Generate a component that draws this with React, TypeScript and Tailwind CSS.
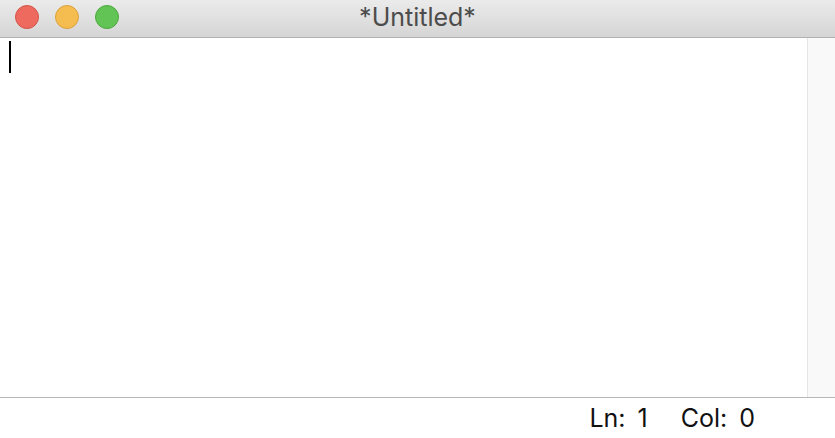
import React from "react";

function Light({ fill, stroke }: { fill: string; stroke: string }) {
  return (
    <svg width="24" height="24" viewBox="0 0 24 24">
      <circle cx="12" cy="12" r="11.5" fill={fill} stroke={stroke} strokeWidth="1" />
    </svg>
  );
}

export default function App() {
  return (
    <div className="w-[835px] h-[438px] flex flex-col bg-white overflow-hidden" style={{ fontFamily: "Inter, 'Noto Sans', sans-serif" }}>
      <div className="relative h-[38px] shrink-0 flex items-center bg-gradient-to-b from-[#ebebeb] to-[#d5d5d5] border-b border-[#b1b1b1]">
        <div className="flex items-center gap-4 pl-[15px] pb-[3px]">
          <Light fill="#ee6a5f" stroke="#d45348" />
          <Light fill="#f5bd4f" stroke="#d9a13c" />
          <Light fill="#61c454" stroke="#4ca83d" />
        </div>
        <div className="absolute inset-0 flex items-center justify-center pb-[3px] text-[25px] text-[#4c4c4c] leading-none">
          *Untitled*
        </div>
      </div>
      <div className="flex flex-1 min-h-0">
        <div className="flex-1 pl-[9px] pt-[3px]">
          <div className="w-[2px] h-[32px] bg-black" />
        </div>
        <div className="w-[28px] bg-[#f9f9f9] border-l border-[#e6e6e6]" />
      </div>
      <div className="h-[41px] shrink-0 border-t border-[#b8b8b8] flex items-center justify-end pr-[80px] text-[25px] text-[#111] leading-none [word-spacing:5px]">
        <span>Ln: 1</span>
        <span className="ml-[33px]">Col: 0</span>
      </div>
    </div>
  );
}
